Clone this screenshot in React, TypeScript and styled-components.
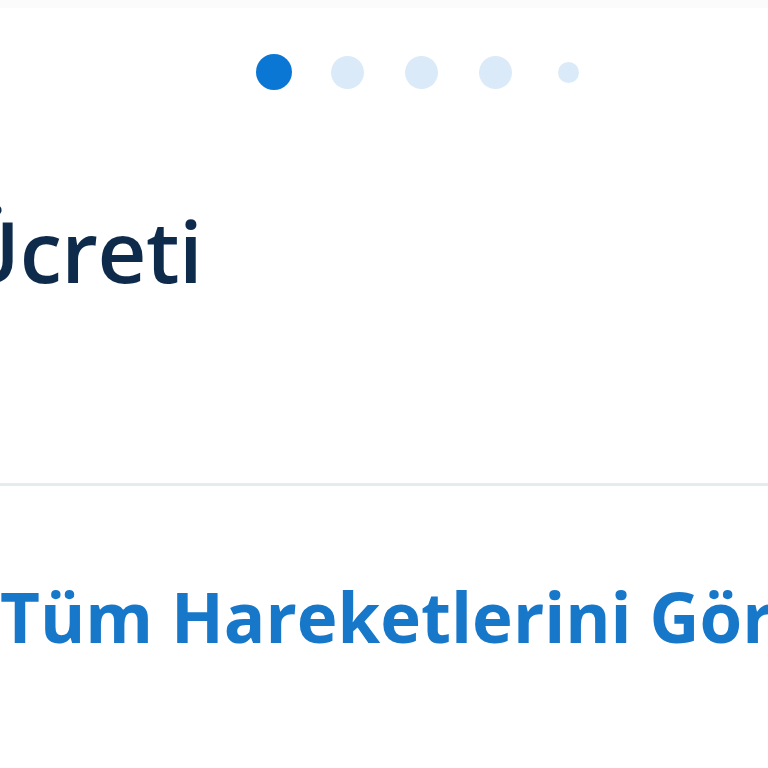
import React from 'react';
import styled, { createGlobalStyle } from 'styled-components';

const Global = createGlobalStyle`
  html, body {
    margin: 0;
    padding: 0;
    background: #ffffff;
    overflow: hidden;
  }
  body {
    font-family: 'Open Sans', 'Noto Sans', sans-serif;
  }
`;

const Screen = styled.div`
  width: 768px;
  height: 768px;
  display: flex;
  flex-direction: column;
  overflow: hidden;
  background: #ffffff;
`;

const TopStrip = styled.div`
  height: 8px;
  background: #fbfbfb;
`;

const Pager = styled.div`
  display: flex;
  align-items: center;
  height: 36px;
  margin-top: 46px;
  padding-left: 256px;
`;

const DotSlot = styled.div`
  width: 73.7px;
  display: flex;
  align-items: center;
`;

const Dot = styled.span<{ $active?: boolean; $size: number }>`
  display: block;
  width: ${(p) => p.$size}px;
  height: ${(p) => p.$size}px;
  margin-left: ${(p) => (36 - p.$size) / 2}px;
  border-radius: 50%;
  background: ${(p) => (p.$active ? '#0a77d5' : '#dbeaf8')};
`;

const Title = styled.h1`
  margin: 118px 0 0 -43px;
  font-size: 85px;
  font-weight: 600;
  line-height: 1;
  color: #0e2b4c;
  white-space: nowrap;
  letter-spacing: -0.5px;
`;

const Divider = styled.hr`
  margin: 190px 0 0 0;
  border: none;
  height: 3px;
  background: #e4ecee;
`;

const Link = styled.a`
  display: block;
  margin: 96px 0 0 0;
  font-size: 69px;
  font-weight: 700;
  line-height: 1;
  color: #1778ca;
  white-space: nowrap;
  text-decoration: none;
`;

const dots = [
  { size: 36, active: true },
  { size: 33 },
  { size: 33 },
  { size: 33 },
  { size: 21 },
];

export default function App() {
  return (
    <>
      <Global />
      <Screen>
        <TopStrip />
        <Pager>
          {dots.map((d, i) => (
            <DotSlot key={i}>
              <Dot $size={d.size} $active={d.active} />
            </DotSlot>
          ))}
        </Pager>
        <Title>Ücreti</Title>
        <Divider />
        <Link href="#">Tüm Hareketlerini Gör</Link>
      </Screen>
    </>
  );
}
